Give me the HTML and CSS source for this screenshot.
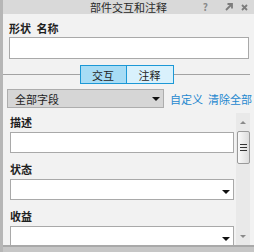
FILE: index.html
```html
<!DOCTYPE html>
<html lang="zh-CN">
  <head>
    <meta charset="UTF-8" />
    <meta name="viewport" content="width=device-width, initial-scale=1.0" />
    <title>部件交互和注释</title>

    <link rel="stylesheet" href="styles.css">
  </head>

  <body>
    <div class="panel">
      <div class="titlebar">
        <span></span>
        <span class="title">部件交互和注释</span>
        <div class="title-tools">
          <span class="help">?</span>
          <svg class="tool-icon" width="8" height="8" viewBox="0 0 8 8">
            <path d="M1 7 L6.5 1.5 M2.5 1 H7 V5.5" stroke="#7c7c7c" stroke-width="1.8" fill="none" />
          </svg>
          <svg class="tool-icon" width="7" height="7" viewBox="0 0 7 7">
            <path d="M1 1 L6 6 M6 1 L1 6" stroke="#7c7c7c" stroke-width="1.8" fill="none" />
          </svg>
        </div>
      </div>

      <div class="name-block">
        <div class="label spaced">形状 名称</div>
        <div class="textbox"></div>
      </div>

      <div class="tabs">
        <div class="tab active">交互</div>
        <div class="tab">注释</div>
      </div>

      <div class="filter-row">
        <div class="dropdown grey">
          <span>全部字段</span>
          <i class="caret"></i>
        </div>
        <a class="link">自定义</a>
        <a class="link">清除全部</a>
      </div>

      <div class="fields">
        <div class="field-list">
          <div class="field">
            <div class="label">描述</div>
            <div class="textbox"></div>
          </div>
          <div class="field">
            <div class="label">状态</div>
            <div class="dropdown"><i class="caret"></i></div>
          </div>
          <div class="field">
            <div class="label">收益</div>
            <div class="dropdown"><i class="caret"></i></div>
          </div>
        </div>
        <div class="scrollbar">
          <i class="arrow-up"></i>
          <div class="thumb">
            <span></span>
            <span></span>
            <span></span>
          </div>
          <i class="arrow-down"></i>
        </div>
      </div>

      <div class="statusbar"></div>
    </div>
  </body>
</html>
```

FILE: styles.css
```css
* {
  margin: 0;
  padding: 0;
  box-sizing: border-box;
}

body {
  width: 254px;
  height: 252px;
  overflow: hidden;
  background-color: #f2f2f2;
  font-family: "Noto Sans CJK SC", "Noto Sans", sans-serif;
  font-size: 11px;
  line-height: 14px;
  color: #1e1e1e;
}

.panel {
  height: 252px;
  display: flex;
  flex-direction: column;
  border-left: 3px solid #b6b6b6;
}

.titlebar {
  height: 14px;
  background-color: #d9d9d9;
  display: grid;
  grid-template-columns: 1fr auto 1fr;
  align-items: center;
}

.title {
  color: #2a2a2a;
}

.title-tools {
  display: flex;
  justify-content: flex-end;
  align-items: center;
  padding-right: 6px;
}

.help {
  font-size: 10px;
  font-weight: bold;
  color: #8a8a8a;
  margin-right: 9px;
}

.tool-icon {
  margin-left: 8px;
}

.label {
  font-weight: bold;
}

.spaced {
  word-spacing: 3px;
}

.name-block {
  margin-top: 7px;
  padding: 0 5px 0 6px;
}

.name-block .textbox {
  margin-top: 2px;
  height: 22px;
}

.textbox {
  height: 21px;
  background-color: white;
  border: 1px solid #a9a9a9;
}

.tabs {
  margin-top: 6px;
  padding-right: 4px;
  display: flex;
  align-items: center;
}

.tabs::before,
.tabs::after {
  content: "";
  flex: 1;
  height: 1px;
  background-color: #a3a3a3;
}

.tab {
  width: 47px;
  height: 19px;
  display: flex;
  justify-content: center;
  align-items: center;
  border: 1px solid #1c98d6;
  background-color: #d9f1fc;
}

.tab + .tab {
  border-left: none;
}

.tab.active {
  background-color: #a7dcf5;
}

.filter-row {
  margin-top: 5px;
  padding-left: 4px;
  display: flex;
  align-items: center;
  white-space: nowrap;
}

.dropdown {
  height: 21px;
  display: flex;
  align-items: center;
  justify-content: space-between;
  padding: 0 3px 0 7px;
  background-color: white;
  border: 1px solid #a9a9a9;
}

.dropdown.grey {
  width: 157px;
  height: 19px;
  background-color: #d6d6d6;
  border-color: #adadad;
}

.caret {
  margin-left: auto;
  width: 0;
  height: 0;
  border-left: 4px solid transparent;
  border-right: 4px solid transparent;
  border-top: 4px solid #111;
}

.field .dropdown .caret {
  margin-top: 5px;
}

.link {
  color: #1f88cf;
  margin-left: 6px;
}

.link + .link {
  margin-left: 5px;
}

.fields {
  margin-top: 5px;
  flex: 1;
  min-height: 0;
  display: flex;
  padding-right: 4px;
}

.field-list {
  flex: 1;
  overflow: hidden;
  padding: 2px 2px 0 7px;
}

.field + .field {
  margin-top: 9px;
}

.field .label {
  margin-bottom: 3px;
}

.scrollbar {
  width: 14px;
  background-color: #e9e9e9;
  display: flex;
  flex-direction: column;
  align-items: center;
  padding: 8px 0 7px;
}

.arrow-up,
.arrow-down {
  width: 0;
  height: 0;
  border-left: 3px solid transparent;
  border-right: 3px solid transparent;
}

.arrow-up {
  border-bottom: 3px solid #8a8a8a;
}

.arrow-down {
  margin-top: auto;
  border-top: 3px solid #8a8a8a;
}

.thumb {
  margin-top: 7px;
  width: 13px;
  height: 33px;
  border: 1px solid #9a9a9a;
  border-radius: 2px;
  background: linear-gradient(to right, #fafafa, #dcdcdc);
  display: flex;
  flex-direction: column;
  justify-content: center;
  align-items: center;
  gap: 2px;
}

.thumb span {
  width: 7px;
  height: 1px;
  background-color: #333;
}

.statusbar {
  height: 7px;
  background-color: #c6c6c6;
  border-top: 2px solid #a9a9a9;
}
```
